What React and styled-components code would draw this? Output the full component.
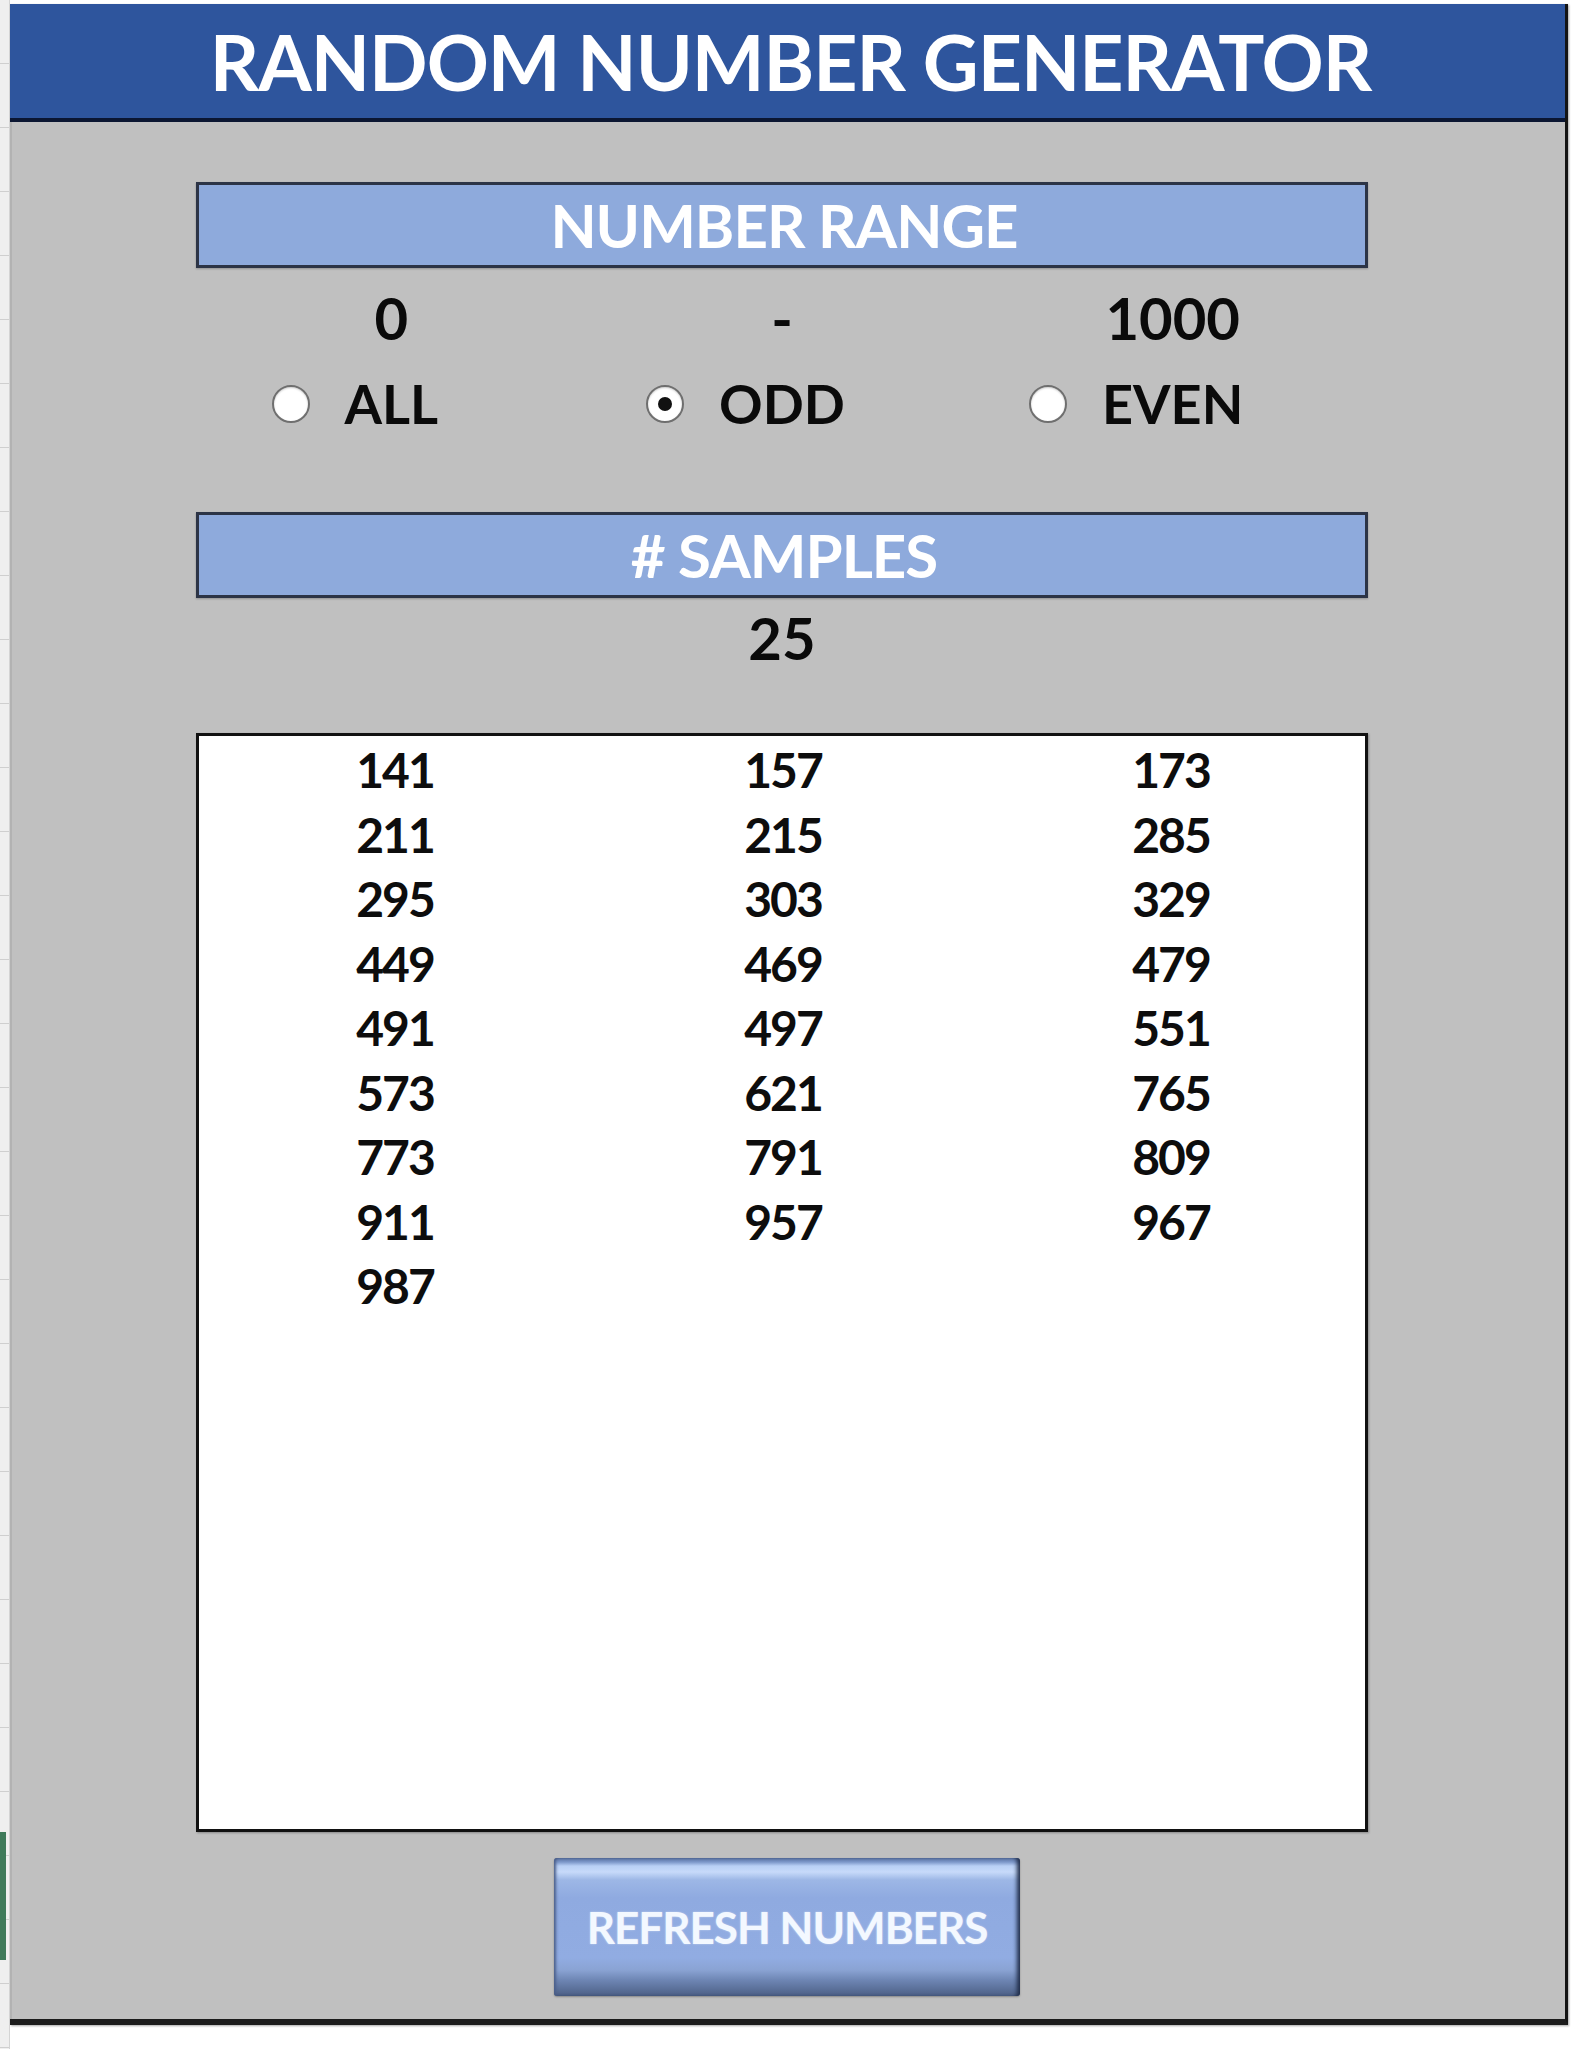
import React from "react";
import styled, { createGlobalStyle } from "styled-components";

const Global = createGlobalStyle`
  html, body { margin: 0; padding: 0; background: #ffffff; }
  body { font-family: Lato, "Open Sans", sans-serif; }
  * { box-sizing: border-box; }
`;

const Page = styled.div`
  display: flex;
  width: 1588px;
  height: 2049px;
  background: #ffffff;
`;

const SheetStrip = styled.div`
  width: 10px;
  flex: none;
  height: 2049px;
  background-color: #efefef;
  background-image: repeating-linear-gradient(
    to bottom,
    transparent 0px,
    transparent 63px,
    #cfcfcf 63px,
    #cfcfcf 64px
  );
  border-right: 1px solid #d4d4d4;
  position: relative;
`;

const CellMark = styled.div`
  position: absolute;
  left: 0;
  top: 1832px;
  width: 6px;
  height: 128px;
  background: #3f7a5a;
`;

const Panel = styled.div`
  width: 1558px;
  flex: none;
  margin-top: 4px;
  height: 2021px;
  display: flex;
  flex-direction: column;
  border-right: 3px solid #141414;
  border-bottom: 6px solid #1c1c1c;
  box-shadow: 1px 1px 2px rgba(0, 0, 0, 0.35);
`;

const Header = styled.div`
  height: 118px;
  flex: none;
  background: #2e559d;
  border-bottom: 4px solid #0b1632;
  display: flex;
  align-items: center;
  justify-content: center;
  color: #ffffff;
  font-family: Lato, sans-serif;
  font-weight: 700;
  font-size: 77px;
  letter-spacing: -1px;
  padding-left: 6px;
  line-height: 1;
`;

const Body = styled.div`
  flex: 1;
  background: #c0c0c0;
  border-left: 2px solid #b2b2b2;
  padding-top: 60px;
  padding-left: 184px;
`;

const Content = styled.div`
  width: 1172px;
  display: flex;
  flex-direction: column;
`;

const SectionBar = styled.div`
  height: 86px;
  background: #8eaadc;
  border: 3px solid #2c3446;
  box-shadow: 0 1px 2px rgba(0, 0, 0, 0.25);
  display: flex;
  align-items: center;
  justify-content: center;
  color: #ffffff;
  font-weight: 700;
  font-size: 60px;
  letter-spacing: -1px;
  line-height: 1;
  padding-left: 4px;
  margin-top: ${(p) => p.$mt || 0}px;
`;

const ThreeCol = styled.div`
  display: grid;
  grid-template-columns: repeat(3, 1fr);
  height: ${(p) => p.$h}px;
  align-items: center;
  justify-items: center;
  color: #0a0a0a;
  font-weight: 700;
  font-size: ${(p) => p.$fs}px;
  line-height: 1;
`;

const RangeValue = styled.span`
  display: block;
`;

const RadioOption = styled.div`
  display: flex;
  align-items: center;
`;

const RadioDot = styled.span`
  width: 38px;
  height: 38px;
  flex: none;
  border-radius: 50%;
  background: #ffffff;
  border: 2px solid #6f6f6f;
  box-shadow: inset 0 1px 2px rgba(0, 0, 0, 0.2);
  margin-left: -73px;
  margin-right: 35px;
  display: flex;
  align-items: center;
  justify-content: center;
  &::after {
    content: "";
    width: 14px;
    height: 14px;
    border-radius: 50%;
    background: ${(p) => (p.$checked ? "#111111" : "transparent")};
  }
`;

const RadioLabel = styled.span`
  display: block;
`;

const SampleCount = styled.div`
  height: 80px;
  display: flex;
  align-items: center;
  justify-content: center;
  color: #0a0a0a;
  font-weight: 700;
  font-size: 58px;
  line-height: 1;
`;

const NumberBox = styled.div`
  margin-top: 55px;
  height: 1099px;
  background: #ffffff;
  border: 3px solid #111111;
  box-shadow: 1px 1px 2px rgba(0, 0, 0, 0.3);
  padding-top: 2px;
  padding-left: 2px;
  display: grid;
  grid-template-columns: repeat(3, 1fr);
  grid-auto-rows: 64.5px;
  align-content: start;
`;

const NumberCell = styled.div`
  display: flex;
  align-items: center;
  justify-content: center;
  color: #0d0d0d;
  font-weight: 700;
  font-size: 48px;
  letter-spacing: -2px;
  line-height: 1;
`;

const ButtonRow = styled.div`
  display: flex;
  justify-content: center;
  margin-top: 26px;
  padding-left: 10px;
`;

const RefreshButton = styled.button`
  width: 466px;
  height: 138px;
  border: none;
  border-radius: 3px;
  padding: 0;
  cursor: pointer;
  color: #f3f8ff;
  font-family: Lato, sans-serif;
  font-weight: 700;
  font-size: 44px;
  letter-spacing: -1px;
  text-shadow: 0 0 2px rgba(255, 255, 255, 0.5);
  background: linear-gradient(
    to bottom,
    #5c74a3 0px,
    #7c97c9 4px,
    #b9d0f5 8px,
    #c7dafa 14px,
    #9db7e6 22px,
    #8faae0 40px,
    #91ace2 100px,
    #8aa3d3 112px,
    #6e86b4 122px,
    #4c5f85 138px
  );
  box-shadow: inset -5px 0 4px -2px #1f2c48, inset 4px 0 3px -2px #4b5f8a,
    0 1px 2px rgba(0, 0, 0, 0.3);
`;

const numbers = [
  141, 157, 173, 211, 215, 285, 295, 303, 329, 449, 469, 479, 491, 497, 551,
  573, 621, 765, 773, 791, 809, 911, 957, 967, 987,
];

export default function App() {
  return (
    <>
      <Global />
      <Page>
        <SheetStrip>
          <CellMark />
        </SheetStrip>
        <Panel>
          <Header>RANDOM NUMBER GENERATOR</Header>
          <Body>
            <Content>
              <SectionBar>NUMBER RANGE</SectionBar>
              <ThreeCol $h={100} $fs={58}>
                <RangeValue>0</RangeValue>
                <RangeValue>-</RangeValue>
                <RangeValue>1000</RangeValue>
              </ThreeCol>
              <ThreeCol $h={72} $fs={54}>
                <RadioOption>
                  <RadioDot />
                  <RadioLabel>ALL</RadioLabel>
                </RadioOption>
                <RadioOption>
                  <RadioDot $checked />
                  <RadioLabel>ODD</RadioLabel>
                </RadioOption>
                <RadioOption>
                  <RadioDot />
                  <RadioLabel>EVEN</RadioLabel>
                </RadioOption>
              </ThreeCol>
              <SectionBar $mt={72}># SAMPLES</SectionBar>
              <SampleCount>25</SampleCount>
              <NumberBox>
                {numbers.map((n) => (
                  <NumberCell key={n}>{n}</NumberCell>
                ))}
              </NumberBox>
              <ButtonRow>
                <RefreshButton>REFRESH NUMBERS</RefreshButton>
              </ButtonRow>
            </Content>
          </Body>
        </Panel>
      </Page>
    </>
  );
}
